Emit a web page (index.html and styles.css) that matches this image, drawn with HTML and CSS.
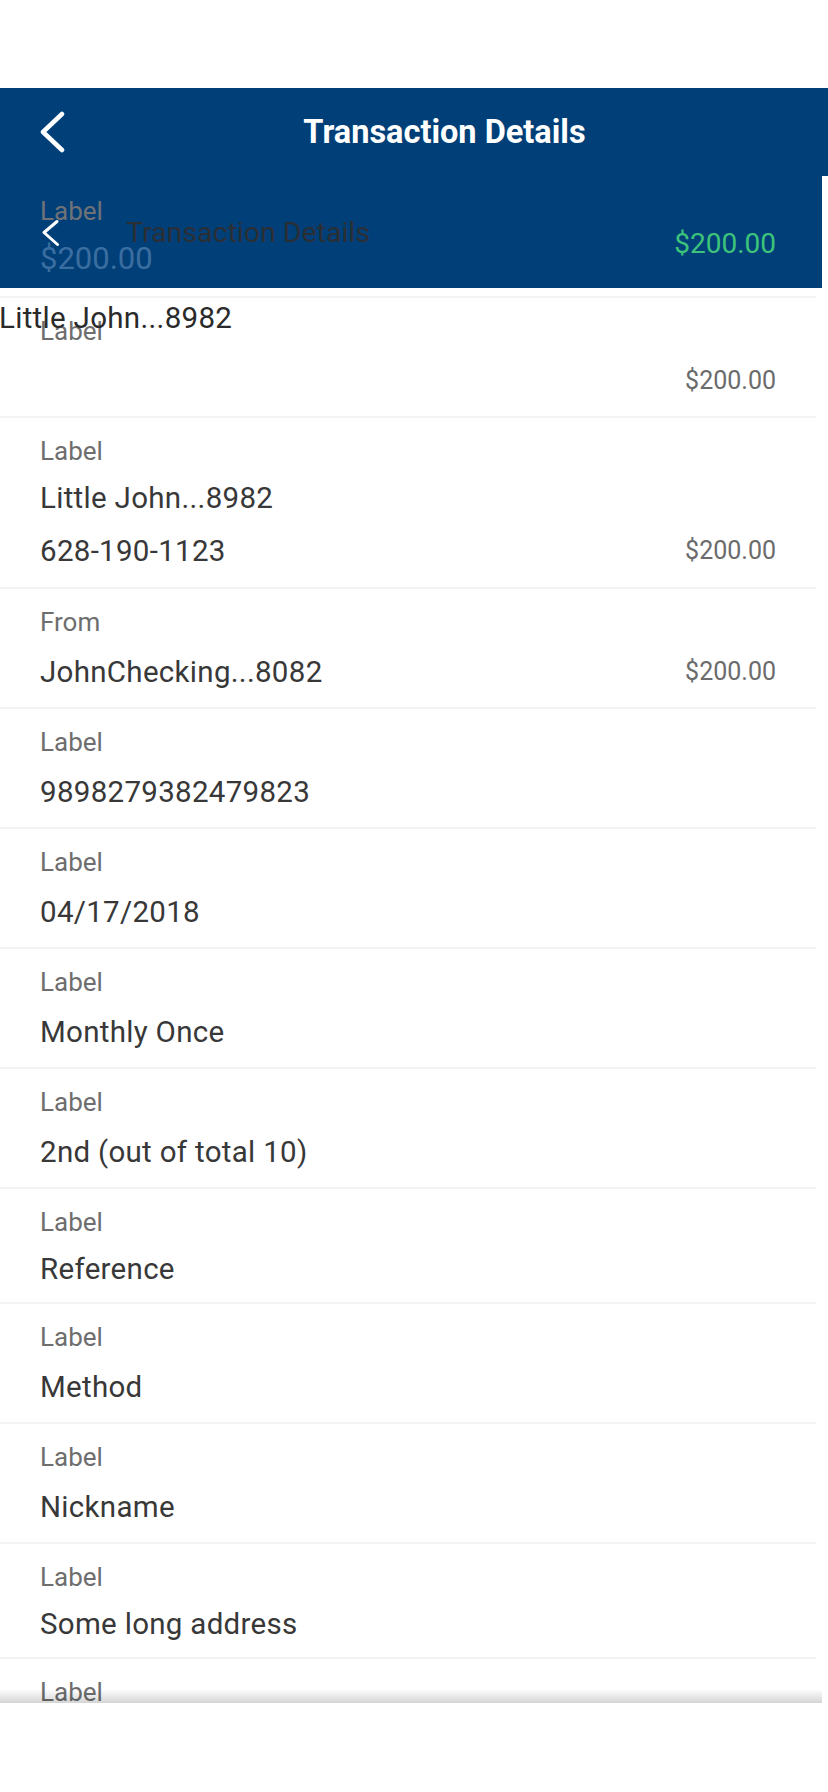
FILE: index.html
```html
<!DOCTYPE html>
<html lang="en">
<head>
<meta charset="utf-8">
<title>Transaction Details</title>
<link rel="stylesheet" href="styles.css">
</head>
<body>
<div class="status"></div>
<header class="navbar">
  <span class="back">
    <svg width="26" height="42" viewBox="0 0 26 42"><path d="M23 3 L4 21 L23 39" fill="none" stroke="#fff" stroke-width="4.5" stroke-linecap="round" stroke-linejoin="round"/></svg>
  </span>
  <h1 class="title">Transaction Details</h1>
</header>
<main class="screen">
  <section class="hero">
    <div class="hero-left">
      <div class="hero-label">Label</div>
      <div class="hero-amount">$200.00</div>
    </div>
    <div class="hero-total">$200.00</div>
    <div class="ghost-nav">
      <svg width="19" height="28" viewBox="0 0 19 28"><path d="M16 2.5 L3 13.5 L16.5 25.5" fill="none" stroke="#fff" stroke-width="3" stroke-linecap="round" stroke-linejoin="round"/></svg>
      <span class="ghost-title">Transaction Details</span>
    </div>
  </section>
  <div class="stray">Little John...8982</div>
  <ul class="list">
    <li class="row">
      <div class="fields"><div class="label">Label</div><div class="value"></div></div>
      <div class="amount">$200.00</div>
    </li>
    <li class="row row--double">
      <div class="fields"><div class="label">Label</div><div class="value">Little John...8982</div><div class="value">628-190-1123</div></div>
      <div class="amount">$200.00</div>
    </li>
    <li class="row">
      <div class="fields"><div class="label">From</div><div class="value">JohnChecking...8082</div></div>
      <div class="amount">$200.00</div>
    </li>
    <li class="row">
      <div class="fields"><div class="label">Label</div><div class="value">9898279382479823</div></div>
    </li>
    <li class="row">
      <div class="fields"><div class="label">Label</div><div class="value">04/17/2018</div></div>
    </li>
    <li class="row">
      <div class="fields"><div class="label">Label</div><div class="value">Monthly Once</div></div>
    </li>
    <li class="row">
      <div class="fields"><div class="label">Label</div><div class="value">2nd (out of total 10)</div></div>
    </li>
    <li class="row row--short">
      <div class="fields"><div class="label">Label</div><div class="value">Reference</div></div>
    </li>
    <li class="row">
      <div class="fields"><div class="label">Label</div><div class="value">Method</div></div>
    </li>
    <li class="row">
      <div class="fields"><div class="label">Label</div><div class="value">Nickname</div></div>
    </li>
    <li class="row row--short">
      <div class="fields"><div class="label">Label</div><div class="value">Some long address</div></div>
    </li>
    <li class="row">
      <div class="fields"><div class="label">Label</div><div class="value">Notes</div></div>
    </li>
  </ul>
  <div class="fade"></div>
</main>
</body>
</html>
```

FILE: styles.css
```css
* { box-sizing: border-box; }
html, body { margin: 0; padding: 0; background: #fff; }
body {
  width: 828px;
  font-family: Roboto, "Noto Sans", "Liberation Sans", sans-serif;
  color: #333;
}
.status { height: 88px; }

.navbar {
  height: 88px;
  width: 828px;
  background: #013f79;
  display: flex;
  align-items: center;
  padding-left: 39px;
}
.back { display: flex; width: 26px; height: 42px; }
.title {
  flex: 1;
  margin: 0;
  text-align: center;
  color: #fff;
  font-size: 32.5px;
  font-weight: 700;
  line-height: 40px;
  padding-right: 4px;
}

.screen {
  position: relative;
  width: 822px;
  height: 1527px;
  overflow: hidden;
}

.hero {
  position: relative;
  height: 112px;
  background: #013f79;
  display: flex;
  justify-content: space-between;
  align-items: flex-start;
  padding: 0 46px 0 40px;
}
.hero-label {
  margin-top: 20px;
  font-size: 26px;
  line-height: 30px;
  color: #6f7378;
}
.hero-amount {
  margin-top: 13px;
  font-size: 31px;
  line-height: 40px;
  color: #3a6ea0;
}
.hero-total {
  margin-top: 48px;
  font-size: 28px;
  line-height: 40px;
  color: #3dc37a;
}
.ghost-nav {
  position: absolute;
  top: 43px;
  left: 41px;
  height: 28px;
  display: flex;
  align-items: center;
}
.ghost-nav svg { display: block; }
.ghost-title {
  margin-left: 66px;
  font-size: 28.5px;
  line-height: 34px;
  color: #2b2f34;
}

.stray {
  position: absolute;
  top: 120px;
  left: -1px;
  font-size: 29.5px;
  letter-spacing: 0.3px;
  line-height: 44px;
  color: #2a2a2a;
  z-index: 2;
}

.list {
  list-style: none;
  margin: 0;
  padding: 8px 0 0;
  width: 816px;
}
.row {
  display: flex;
  justify-content: space-between;
  align-items: flex-end;
  border-top: 2px solid #f3f3f3;
  padding: 18px 40px 13px 40px;
}
.fields { display: flex; flex-direction: column; }
.label {
  font-size: 26px;
  line-height: 30px;
  color: #6e6e6e;
}
.value {
  margin-top: 13px;
  min-height: 44px;
  font-size: 29.5px;
  letter-spacing: 0.3px;
  line-height: 44px;
  color: #383838;
}
.amount {
  font-size: 25px;
  line-height: 44px;
  color: #6b6b6b;
}
.row--double { padding-bottom: 14px; }
.row--double .value { margin-top: 10px; }
.row--double .value + .value { margin-top: 9px; }
.row--short { padding-bottom: 11px; }
.row--short .value { margin-top: 10px; }

.fade {
  position: absolute;
  left: 0;
  right: 0;
  bottom: 0;
  height: 14px;
  background: linear-gradient(rgba(0,0,0,0), rgba(0,0,0,0.17));
}
```
